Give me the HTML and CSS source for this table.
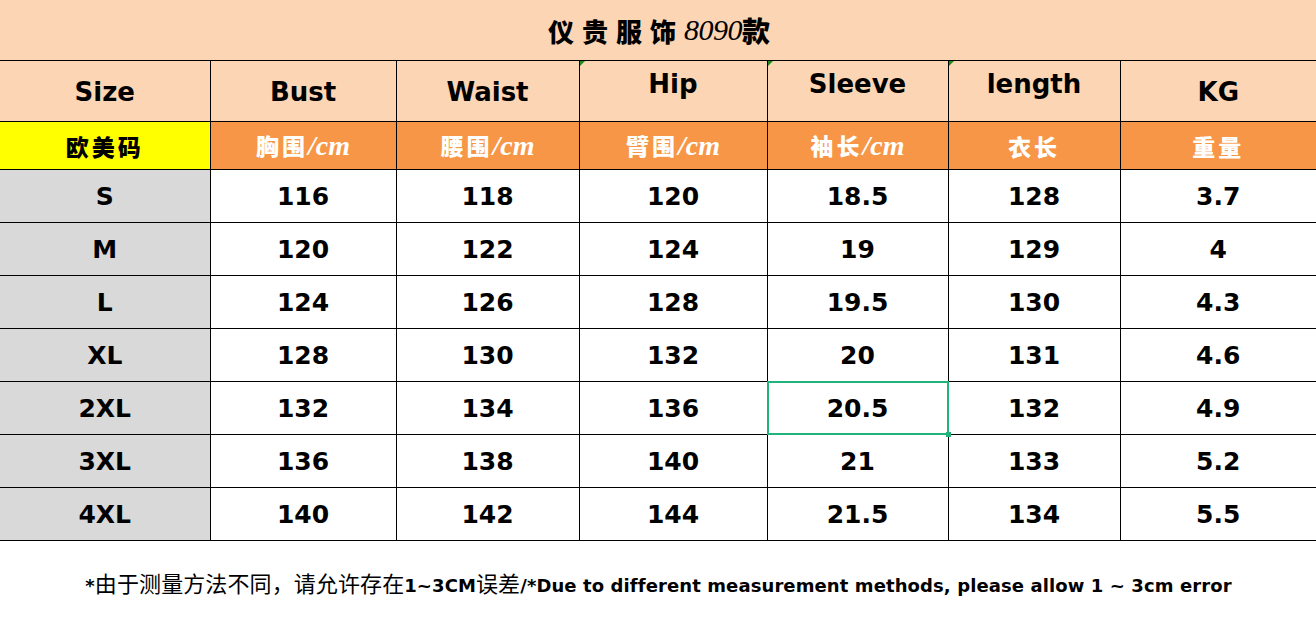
FILE: index.html
```html
<!DOCTYPE html>
<html lang="zh">
<head>
<meta charset="utf-8">
<title>仪贵服饰8090款</title>
<link rel="stylesheet" href="styles.css">
</head>
<body>
<div class="sheet">
  <div class="title"><span class="cn">仪贵服饰</span><span class="num">8090</span><span class="cn2">款</span></div>
  <table class="grid">
    <colgroup>
      <col class="c1"><col class="c2"><col class="c3"><col class="c4"><col class="c5"><col class="c6"><col class="c7">
    </colgroup>
    <tr class="head">
      <td>Size</td><td>Bust</td><td>Waist</td><td class="hi mark">Hip</td><td class="hi mark">Sleeve</td><td class="hi mark">length</td><td>KG</td>
    </tr>
    <tr class="sub">
      <td class="yellow">欧美码</td>
      <td>胸围<i>/cm</i></td>
      <td>腰围<i>/cm</i></td>
      <td>臂围<i>/cm</i></td>
      <td>袖长<i>/cm</i></td>
      <td>衣长</td>
      <td>重量</td>
    </tr>
    <tr class="row"><td class="sz">S</td><td>116</td><td>118</td><td>120</td><td>18.5</td><td>128</td><td>3.7</td></tr>
    <tr class="row"><td class="sz">M</td><td>120</td><td>122</td><td>124</td><td>19</td><td>129</td><td>4</td></tr>
    <tr class="row"><td class="sz">L</td><td>124</td><td>126</td><td>128</td><td>19.5</td><td>130</td><td>4.3</td></tr>
    <tr class="row"><td class="sz">XL</td><td>128</td><td>130</td><td>132</td><td>20</td><td>131</td><td>4.6</td></tr>
    <tr class="row"><td class="sz">2XL</td><td>132</td><td>134</td><td>136</td><td class="sel">20.5</td><td>132</td><td>4.9</td></tr>
    <tr class="row"><td class="sz">3XL</td><td>136</td><td>138</td><td>140</td><td>21</td><td>133</td><td>5.2</td></tr>
    <tr class="row"><td class="sz">4XL</td><td>140</td><td>142</td><td>144</td><td>21.5</td><td>134</td><td>5.5</td></tr>
  </table>
  <p class="note">*<span class="ncn">由于测量方法不同，请允许存在</span>1~3CM<span class="ncn">误差</span>/*Due to different measurement methods, please allow 1 ~ 3cm error</p>
</div>
</body>
</html>
```

FILE: styles.css
```css
html, body {
  margin: 0;
  padding: 0;
  background: #ffffff;
}

.sheet {
  width: 1316px;
  font-family: "DejaVu Sans", "Noto Sans CJK SC", sans-serif;
  font-weight: bold;
  color: #000;
}

.title {
  height: 60px;
  background: #fcd5b4;
  display: flex;
  align-items: center;
  justify-content: center;
  padding-left: 2px;
  box-sizing: border-box;
}

.title .cn {
  font-family: "Noto Sans CJK SC", sans-serif;
  font-weight: 900;
  font-size: 26px;
  letter-spacing: 8px;
}

.title .num {
  font-family: "Liberation Serif", serif;
  font-style: italic;
  font-weight: normal;
  font-size: 30px;
  letter-spacing: -0.5px;
}

.title .cn2 {
  font-family: "Noto Sans CJK SC", sans-serif;
  font-weight: 900;
  font-size: 28px;
}

.grid {
  width: 1316px;
  table-layout: fixed;
  border-collapse: collapse;
  border-spacing: 0;
}

.c1 { width: 210px; }
.c2 { width: 186px; }
.c3 { width: 183px; }
.c4 { width: 188px; }
.c5 { width: 181px; }
.c6 { width: 172px; }
.c7 { width: 196px; }

.grid td {
  border: 1px solid #000;
  text-align: center;
  vertical-align: middle;
  padding: 0;
  line-height: 30px;
}

.grid tr td:first-child { border-left: none; }
.grid tr td:last-child { border-right: none; }

.head td {
  height: 61px;
  background: #fcd5b4;
  font-size: 26px;
  padding-top: 1px;
  box-sizing: border-box;
}

.head td.hi {
  vertical-align: top;
  padding-top: 8px;
}

.head td.mark { position: relative; }

.head td.mark::before {
  content: "";
  position: absolute;
  left: 0;
  top: 0;
  width: 0;
  height: 0;
  border-top: 5px solid #1d8a1d;
  border-right: 5px solid transparent;
}

.sub td {
  height: 48px;
  background: #f79646;
  color: #fff;
  font-family: "Noto Sans CJK SC", sans-serif;
  font-weight: 900;
  font-size: 23px;
  letter-spacing: 3px;
  box-sizing: border-box;
}

.sub td i {
  font-family: "Liberation Serif", serif;
  font-weight: bold;
  font-size: 28px;
  letter-spacing: 0;
}

.sub td.yellow {
  background: #ffff00;
  color: #000;
}

.row td {
  height: 53px;
  background: #fff;
  font-size: 25px;
  box-sizing: border-box;
  padding-top: 2px;
}

.row td.sz { background: #d9d9d9; }

.row td.sel { position: relative; }

.row td.sel::after {
  content: "";
  position: absolute;
  left: -1px;
  top: -1px;
  right: -1px;
  bottom: -1px;
  border: 2px solid #21b47a;
}

.row td.sel::before {
  content: "";
  position: absolute;
  right: -3px;
  bottom: -3px;
  width: 5px;
  height: 5px;
  background: #21b47a;
  z-index: 1;
}

.note {
  margin: 25px 0 0 0;
  text-align: center;
  font-size: 18px;
  letter-spacing: 0.1px;
  white-space: nowrap;
  padding-left: 1px;
}

.note .ncn {
  font-family: "Noto Sans CJK SC", sans-serif;
  font-weight: normal;
  font-size: 22px;
}
```
